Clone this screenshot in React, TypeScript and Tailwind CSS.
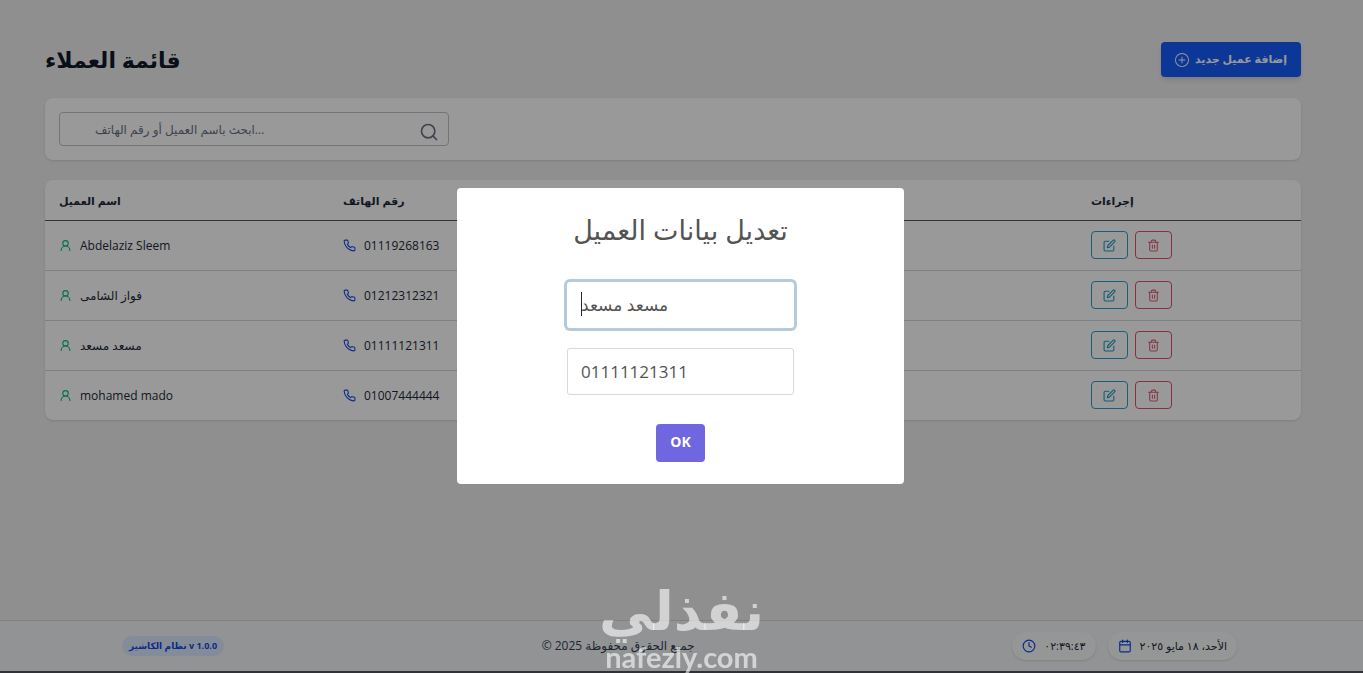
import { BsPlusCircle } from "react-icons/bs";
import {
  FiCalendar,
  FiClock,
  FiEdit,
  FiPhone,
  FiSearch,
  FiTrash2,
} from "react-icons/fi";
import { LuUserRound } from "react-icons/lu";

interface Customer {
  id: number;
  name: string;
  phone: string;
}

const customers: Customer[] = [
  { id: 1, name: "Abdelaziz Sleem", phone: "01119268163" },
  { id: 2, name: "فواز الشامى", phone: "01212312321" },
  { id: 3, name: "مسعد مسعد", phone: "01111121311" },
  { id: 4, name: "mohamed mado", phone: "01007444444" },
];

function CustomersTable() {
  return (
    <div className="mt-5 rounded-lg bg-white shadow-sm">
      <table className="w-full table-fixed border-collapse text-left text-xs text-gray-800">
        <thead>
          <tr className="h-10 border-b border-gray-600 text-[11px] font-bold">
            <th className="w-[284px] pt-1 pl-3.5">اسم العميل</th>
            <th className="pt-1 pl-3.5">رقم الهاتف</th>
            <th className="w-[224px] pt-1 pl-3.5">إجراءات</th>
          </tr>
        </thead>
        <tbody>
          {customers.map((customer) => (
            <tr
              key={customer.id}
              className="h-[50px] border-b border-gray-300 last:border-b-0"
            >
              <td className="pl-3.5">
                <div className="flex items-center gap-2">
                  <LuUserRound className="size-[13px] text-emerald-500" />
                  <span className="pt-0.5">{customer.name}</span>
                </div>
              </td>
              <td className="pl-3.5">
                <div className="flex items-center gap-2">
                  <FiPhone className="size-[13px] text-blue-700" />
                  <span className="pt-0.5">{customer.phone}</span>
                </div>
              </td>
              <td className="pl-3.5">
                <div className="flex items-center gap-[7px]">
                  <button
                    aria-label="تعديل"
                    className="flex h-7 w-[37px] items-center justify-center rounded border border-[#2a9fcf] text-[#1f9ac8]"
                  >
                    <FiEdit className="size-[13px]" />
                  </button>
                  <button
                    aria-label="حذف"
                    className="flex h-7 w-[37px] items-center justify-center rounded border border-[#e0506e] text-[#e0607a]"
                  >
                    <FiTrash2 className="size-[13px]" />
                  </button>
                </div>
              </td>
            </tr>
          ))}
        </tbody>
      </table>
    </div>
  );
}

function Footer() {
  return (
    <footer className="border-t border-gray-300 bg-[#f3f6f8]">
      <div className="flex h-[50px] items-center justify-between pr-[126px] pl-[122px]">
        <span className="rounded-full bg-blue-100 px-[7px] py-1 text-[9px] leading-3 font-bold text-blue-700">
          نظام الكاشير v 1.0.0
        </span>
        <p className="text-xs text-gray-700">© 2025 جميع الحقوق محفوظة</p>
        <div className="flex gap-3 text-[11px] text-gray-800">
          <span className="flex h-7 items-center gap-2 rounded-full bg-gray-50 px-2.5 shadow-sm">
            <FiClock className="size-[14px] text-blue-700" />
            ٠٢:٣٩:٤٣
          </span>
          <span className="flex h-7 items-center gap-2 rounded-full bg-gray-50 px-2.5 shadow-sm">
            <FiCalendar className="size-[14px] text-blue-700" />
            الأحد، ١٨ مايو ٢٠٢٥
          </span>
        </div>
      </div>
    </footer>
  );
}

function EditModal() {
  return (
    <div
      role="dialog"
      aria-labelledby="modal-title"
      className="flex w-[447px] flex-col items-center rounded bg-white pt-6 pb-[22px] text-[#545454]"
    >
      <h2 id="modal-title" className="text-[27px] leading-9 font-medium">
        تعديل بيانات العميل
      </h2>
      <div className="relative mt-[34px]">
        <input
          aria-label="اسم العميل"
          defaultValue="مسعد مسعد"
          className="block h-[46px] w-[227px] rounded-[3px] px-3.5 text-[17px] ring-3 ring-[#b4cbdd] outline-none"
        />
        <span className="absolute top-2.5 left-3.5 h-6 w-px bg-gray-800" />
      </div>
      <input
        aria-label="رقم الهاتف"
        defaultValue="01111121311"
        className="mt-5 h-[47px] w-[227px] rounded-[3px] border border-[#d9d9d9] px-[13px] text-[17px] outline-none"
      />
      <button className="mt-[29px] h-[38px] rounded bg-[#7066e0] px-3.5 pb-0.5 text-sm font-bold text-white">
        OK
      </button>
    </div>
  );
}

export default function App() {
  return (
    <div className="flex min-h-screen flex-col bg-[#efeff1] font-['Open_Sans','DejaVu_Sans',sans-serif]">
      <main className="grow pt-[42px] pr-[62px] pl-[45px]">
        <div className="flex h-[35px] items-center justify-between">
          <h1 className="text-[22px] font-semibold text-gray-900">
            قائمة العملاء
          </h1>
          <button className="flex h-[35px] items-center gap-1.5 rounded bg-blue-600 px-3.5 text-[11px] font-bold text-white shadow-md">
            <BsPlusCircle className="size-[14px]" />
            إضافة عميل جديد
          </button>
        </div>
        <div className="mt-[21px] rounded-lg bg-white p-3.5 shadow-sm">
          <div className="relative w-[390px]">
            <input
              type="search"
              aria-label="بحث"
              placeholder="ابحث باسم العميل أو رقم الهاتف..."
              className="block h-[34px] w-full rounded-sm border border-[#c4c4c8] px-[35px] text-xs placeholder:text-gray-500"
            />
            <FiSearch className="absolute top-2.5 right-2.5 size-5 text-gray-500" />
          </div>
        </div>
        <CustomersTable />
      </main>
      <Footer />
      <div className="h-0.5 bg-[#303038]" />

      <div className="fixed inset-x-0 top-0 bottom-0.5 flex items-center justify-center bg-black/40 pr-0.5">
        <EditModal />
      </div>
      <div className="pointer-events-none fixed inset-x-0 bottom-0 flex flex-col items-center pb-0.5 text-white/60">
        <span className="text-[54px] leading-[68px] font-bold">نفذلي</span>
        <span className="font-[Lato] text-[29px] leading-7 font-bold">
          nafezly.com
        </span>
      </div>
    </div>
  );
}
